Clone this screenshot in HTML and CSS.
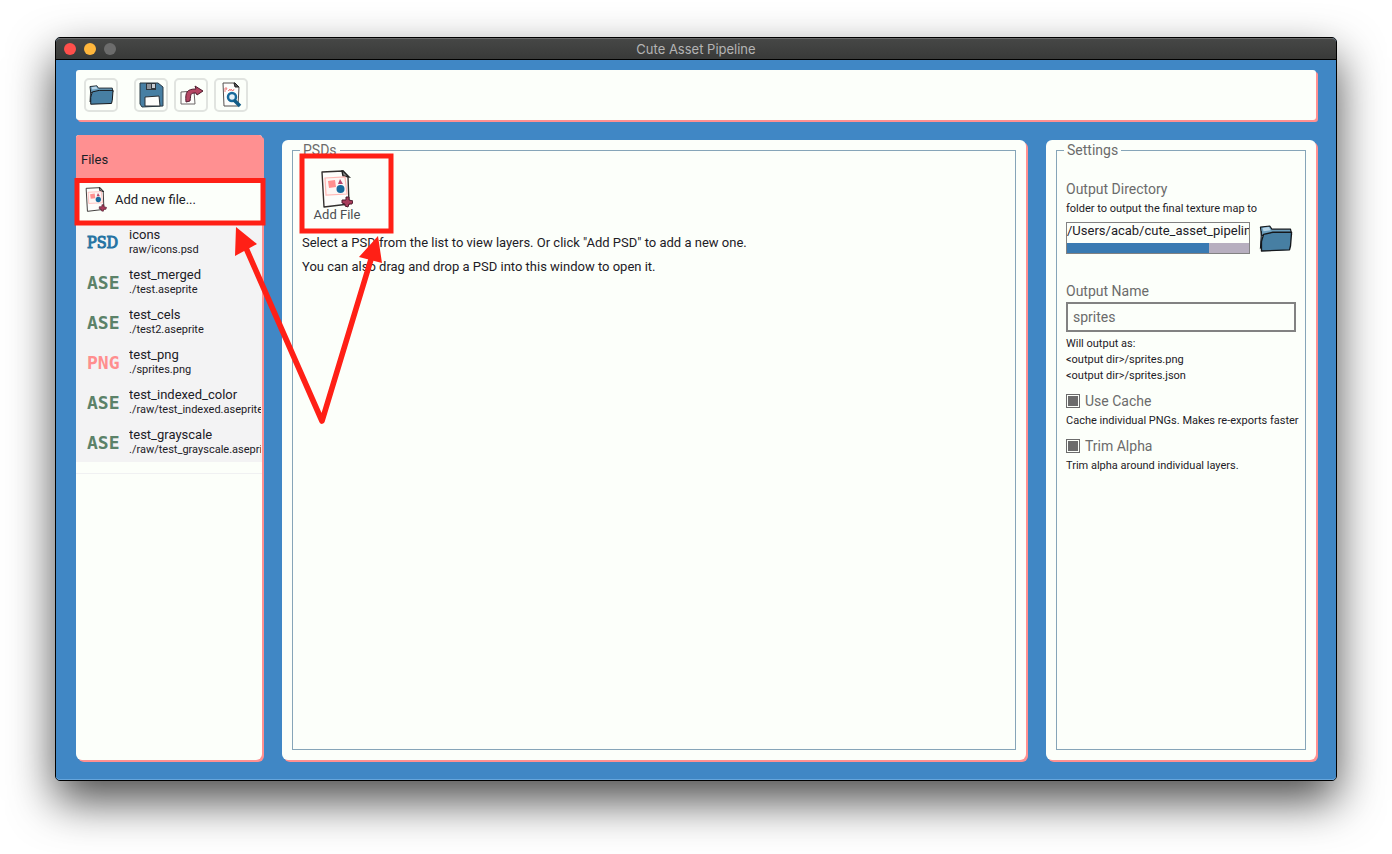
FILE: index.html
```html
<!DOCTYPE html>
<html lang="en">
<head>
<meta charset="utf-8">
<title>Cute Asset Pipeline</title>
<link rel="stylesheet" href="styles.css">
</head>
<body>
<svg class="defs" width="0" height="0" aria-hidden="true">
  <symbol id="folder" viewBox="0 0 32 26">
    <path d="M1 2 L10 1 L12 4 L30 4 L31 9 L2 10 Z" fill="#6b9fbe" stroke="#15181c" stroke-width="1.1" stroke-linejoin="round"/>
    <path d="M3 3 L9 2 L11 5 L4 6 Z" fill="#b5d3e6"/>
    <path d="M2 6 L1 22 L3 20" fill="#477fa3" stroke="#15181c" stroke-width="1"/>
    <path d="M4 9 L13 7 L31 7 L30 20 L29 24 L2 25 L2 16 Z" fill="#477fa3" stroke="#15181c" stroke-width="1.3" stroke-linejoin="round"/>
  </symbol>
  <symbol id="addfile" viewBox="0 0 32 38">
    <path d="M1 2 L22 1 L27 7 L28 34 L3 37 Z" fill="#fdfdfb" stroke="#33302f" stroke-width="1.4" stroke-linejoin="round"/>
    <path d="M21 1 L22 6 L28 7 L22 1 Z" fill="#8c8c8c" stroke="#222" stroke-width="1.4"/>
    <path d="M4 8 L24 7 L26 24 L5 25 Z" fill="#fdf6f4" stroke="#ffb7b4" stroke-width="1.2"/>
    <path d="M7 11 L14 10 L15 17 L8 18 Z" fill="#ff8f8f"/>
    <path d="M19 9 L22 14 L17 14 Z" fill="#b8456a"/>
    <circle cx="19.500" cy="19" r="4" fill="#176a9c"/>
    <path d="M25 27 L28 27 L28 30 L32 31 L31 34 L28 34 L27 37 L24 36 L24 34 L21 33 L21 30 L25 30 Z" fill="#a83d5b" stroke="#4f1c2e" stroke-width="1"/>
  </symbol>
</svg>
<div class="window">
  <header class="titlebar">
    <div class="lights"><i class="light close"></i><i class="light minimize"></i><i class="light zoom"></i></div>
    <h1 class="title">Cute Asset Pipeline</h1>
  </header>
  <div class="workspace">
    <nav class="toolbar">
      <button class="tool tool-open" aria-label="Open"><svg width="25" height="20"><use href="#folder"/></svg></button>
      <button class="tool" aria-label="Save">
        <svg width="26" height="26" viewBox="0 0 26 26"><path d="M2 1 L20 1 L25 5 L25 24 L4 25 L2 22 Z" fill="#477fa3" stroke="#2b3a45" stroke-width="1" stroke-linejoin="round"/><path d="M8 1 L18 1 L18 8 L8 8 Z" fill="#30373d"/><path d="M9 2 L13 2 L13 7 L9 7 Z" fill="#8f959b"/><path d="M14 2 L17 2 L17 6 L14 6 Z" fill="#c9cdd2"/><path d="M7 15 L21 14 L22 24 L7 24 Z" fill="#fdfdfb" stroke="#2b3035"/></svg>
      </button>
      <button class="tool" aria-label="Export">
        <svg width="26" height="26" viewBox="0 0 26 26"><path d="M3 10 L16 9 L17 22 L3 22 Z" fill="#fdfdfb" stroke="#6a6666" stroke-width="1"/><path d="M8 20 C7 10 9 7 18 7 L17 4 L25 9 L19 13 L18 11 C12 11 13 12 12 19 Z" fill="#b54663" stroke="#4f1c2e" stroke-width="1" stroke-linejoin="round"/></svg>
      </button>
      <button class="tool" aria-label="Preview">
        <svg width="26" height="28" viewBox="0 0 26 28"><path d="M5 2 L17 2 L21 6 L20 25 L6 25 Z" fill="#fdfdfb" stroke="#55504f"/><path d="M16 2 L17 6 L21 6 L17 2 Z" fill="#555" stroke="#222"/><path d="M7 11 L7 7 L9 7 L8 9 M10 10 L12 8 L12 10 M13 10 L13 8 L15 10 L16 8" fill="none" stroke="#f08080"/><circle cx="14" cy="16" r="4" fill="#e6f2f8" stroke="#176a9c" stroke-width="2.500"/><path d="M16 19 L22 25" stroke="#125c86" stroke-width="3.500"/></svg>
      </button>
    </nav>
    <div class="columns">
      <aside class="files">
        <h2 class="files-head">Files</h2>
        <button class="add-row"><svg width="22" height="25"><use href="#addfile"/></svg><span>Add new file...</span></button>
        <ul class="file-list">
          <li class="file"><b class="kind psd">PSD</b><div class="names"><span class="name">icons</span><span class="path">raw/icons.psd</span></div></li>
          <li class="file"><b class="kind ase">ASE</b><div class="names"><span class="name">test_merged</span><span class="path">./test.aseprite</span></div></li>
          <li class="file"><b class="kind ase">ASE</b><div class="names"><span class="name">test_cels</span><span class="path">./test2.aseprite</span></div></li>
          <li class="file"><b class="kind png">PNG</b><div class="names"><span class="name">test_png</span><span class="path">./sprites.png</span></div></li>
          <li class="file"><b class="kind ase">ASE</b><div class="names"><span class="name">test_indexed_color</span><span class="path">./raw/test_indexed.aseprite</span></div></li>
          <li class="file"><b class="kind ase">ASE</b><div class="names"><span class="name">test_grayscale</span><span class="path">./raw/test_grayscale.aseprite</span></div></li>
        </ul>
        <div class="list-end"></div>
      </aside>
      <main class="panel">
        <fieldset class="group">
          <legend>PSDs</legend>
          <button class="add-file"><svg width="32" height="38"><use href="#addfile"/></svg><span>Add File</span></button>
          <p class="hint">Select a PSD from the list to view layers. Or click "Add PSD" to add a new one.</p>
          <p class="hint">You can also drag and drop a PSD into this window to open it.</p>
        </fieldset>
      </main>
      <section class="panel">
        <fieldset class="group settings">
          <legend>Settings</legend>
          <label class="label" for="dir">Output Directory</label>
          <p class="note">folder to output the final texture map to</p>
          <div class="dir-row">
            <div class="dir-box">
              <input class="dir-input" id="dir" readonly value="/Users/acab/cute_asset_pipeline">
              <div class="scroll"><div class="thumb"></div></div>
            </div>
            <button class="browse" aria-label="Choose folder"><svg width="34" height="27"><use href="#folder"/></svg></button>
          </div>
          <label class="label" for="outname">Output Name</label>
          <input class="name-input" id="outname" value="sprites">
          <div class="outputs"><p>Will output as:</p><p>&lt;output dir&gt;/sprites.png</p><p>&lt;output dir&gt;/sprites.json</p></div>
          <label class="check"><input type="checkbox" checked><span>Use Cache</span></label>
          <p class="note check-note">Cache individual PNGs. Makes re-exports faster</p>
          <label class="check"><input type="checkbox" checked><span>Trim Alpha</span></label>
          <p class="note">Trim alpha around individual layers.</p>
        </fieldset>
      </section>
    </div>
    <svg class="callout" viewBox="56 60 360 380" width="360" height="380" aria-hidden="true">
      <g fill="none" stroke="#ff2016" stroke-width="5">
        <rect x="77" y="180.500" width="186" height="42.500"/>
        <rect x="302" y="156" width="89" height="75"/>
        <path d="M246 248 L322 421 L372 256" stroke-width="5.600" stroke-linejoin="round"/>
      </g>
      <path d="M236 227 L257 244 L235 256 Z M378 236 L359 257 L382 263 Z" fill="#ff2016"/>
    </svg>
  </div>
</div>
</body>
</html>
```

FILE: styles.css
```css
* { box-sizing: border-box; }

body {
  margin: 0;
  min-height: 100vh;
  padding: 37px 55px 73px;
  display: flex;
  background: #fff;
  color: #1c2026;
  font: 13px/20px Roboto, "Liberation Sans", sans-serif;
}

h1, h2, p, ul { margin: 0; padding: 0; font-weight: 400; }
button, input { font: inherit; color: inherit; margin: 0; }
button { background: none; border: 0; padding: 0; }
svg { display: block; flex: none; }
.defs { position: absolute; }

.window {
  flex: 1;
  min-width: 0;
  display: flex;
  flex-direction: column;
  border: 1px solid #000;
  border-radius: 5px;
  background: #4087c5;
  box-shadow: 0 20px 46px rgba(0, 0, 0, .7);
}

.titlebar {
  display: grid;
  grid-template-columns: 1fr auto 1fr;
  align-items: center;
  height: 22px;
  padding: 0 8px;
  border-top: 1px solid #6a6a6a;
  border-bottom: 1px solid #000;
  border-radius: 4px 4px 0 0;
  background: linear-gradient(#464746, #393a39);
}
.lights { display: flex; gap: 8px; }
.light { width: 12px; height: 12px; border-radius: 50%; }
.close { background: #ff4f4b; }
.minimize { background: #ffb63c; }
.zoom { background: #6c6c6c; }
.title { font: 13px/20px Inter, sans-serif; color: #b4b4b4; }

.workspace {
  position: relative;
  flex: 1;
  display: flex;
  flex-direction: column;
  gap: 15px;
  padding: 10px 20px 20px;
  border-radius: 0 0 4px 4px;
  box-shadow: inset 0 -1px #65a5dc;
}

.toolbar {
  display: flex;
  gap: 6px;
  padding: 8px;
  background: #fcfffa;
  border-radius: 3px;
  box-shadow: 2px 2px #ff9091;
}
.tool {
  display: grid;
  place-items: center;
  width: 34px;
  height: 34px;
  border: 2px solid #e1e4e0;
  border-radius: 5px;
}
.tool-open { margin-right: 10px; }

.columns {
  flex: 1;
  display: grid;
  grid-template-columns: 186px minmax(0, 1fr) 270px;
  gap: 20px;
}

.files {
  background: #fcfffa;
  border-radius: 3px 3px 6px 6px;
  box-shadow: 2px 2px #ff9091;
}
.files-head {
  height: 46px;
  padding: 15px 5px 0;
  font-size: 13px;
  background: #ff9091;
  border-radius: 3px 3px 0 0;
}
.add-row {
  display: flex;
  align-items: center;
  gap: 8px;
  width: 100%;
  height: 41px;
  padding: 0 9px 4px;
  text-align: left;
}
.file-list { list-style: none; background: #f3f3f4; }
.file { display: flex; height: 40px; padding: 0 1px 0 11px; overflow: hidden; }
.kind { width: 42px; flex: none; font-size: 18px; line-height: 42px; }
.psd { font-family: "DejaVu Serif Condensed", "DejaVu Serif", serif; font-size: 16px; font-weight: 400; color: #2573a3; -webkit-text-stroke: 1px #2573a3; }
.ase { font-family: "DejaVu Sans Mono", monospace; color: #5b8269; }
.png { font-family: "DejaVu Sans Mono", monospace; color: #ff8e8e; }
.names { min-width: 0; padding-top: 5px; overflow: hidden; }
.name, .path { display: block; white-space: nowrap; line-height: 15px; }
.path { font-size: 11px; }
.list-end { height: 12px; border-bottom: 1px solid #f0f1f2; }

.panel {
  display: flex;
  margin-top: 5px;
  padding: 2px 10px 10px;
  background: #fcfffa;
  border-radius: 6px;
  box-shadow: 2px 2px #ff9091;
}
.group {
  flex: 1;
  min-width: 0;
  margin: 0;
  padding: 0 9px;
  border: 1px solid #86a5b8;
}
legend {
  margin-left: -2px;
  padding: 0 3px;
  font-size: 14px;
  line-height: 16px;
  color: #6b6b6b;
}

.add-file {
  display: flex;
  flex-direction: column;
  align-items: center;
  width: 70px;
  margin-bottom: 9px;
  padding-top: 12px;
  line-height: 14px;
  color: #4b4e52;
}
.hint { line-height: 24px; }

.settings { padding-top: 21px; }
.label { display: block; font-size: 14px; color: #6b6b6b; }
.note { font-size: 11px; white-space: nowrap; }
.dir-row { display: flex; align-items: center; gap: 9px; margin: 3px 0 27px; }
.dir-box { flex: 1; min-width: 0; height: 32px; border: 1px solid #828282; }
.dir-input {
  display: block;
  width: 100%;
  height: 20px;
  padding: 0 0 4px;
  border: 0;
  background: none;
}
.scroll { height: 10px; background: #b7afbf; }
.thumb { width: 78%; height: 100%; background: #397ab2; }
.browse { padding-right: 3px; }
.name-input {
  display: block;
  width: 100%;
  height: 30px;
  margin: 1px 0 4px;
  padding: 0 5px;
  border: 2px solid #828282;
  background: none;
  font-size: 14px;
  color: #6b6b6b;
}
.outputs { margin-bottom: 7px; font-size: 11px; line-height: 16px; }
.check { display: flex; align-items: center; gap: 5px; font-size: 14px; color: #6b6b6b; }
.check input {
  appearance: none;
  width: 14px;
  height: 14px;
  padding: 1px;
  border: 1px solid #6b6b6b;
}
.check input:checked { background: #6b6b6b content-box; }
.check-note { margin-bottom: 5px; }

/* Red highlight boxes and arrows lying over the panels */
.callout { position: absolute; left: 0; top: 0; pointer-events: none; }
```
